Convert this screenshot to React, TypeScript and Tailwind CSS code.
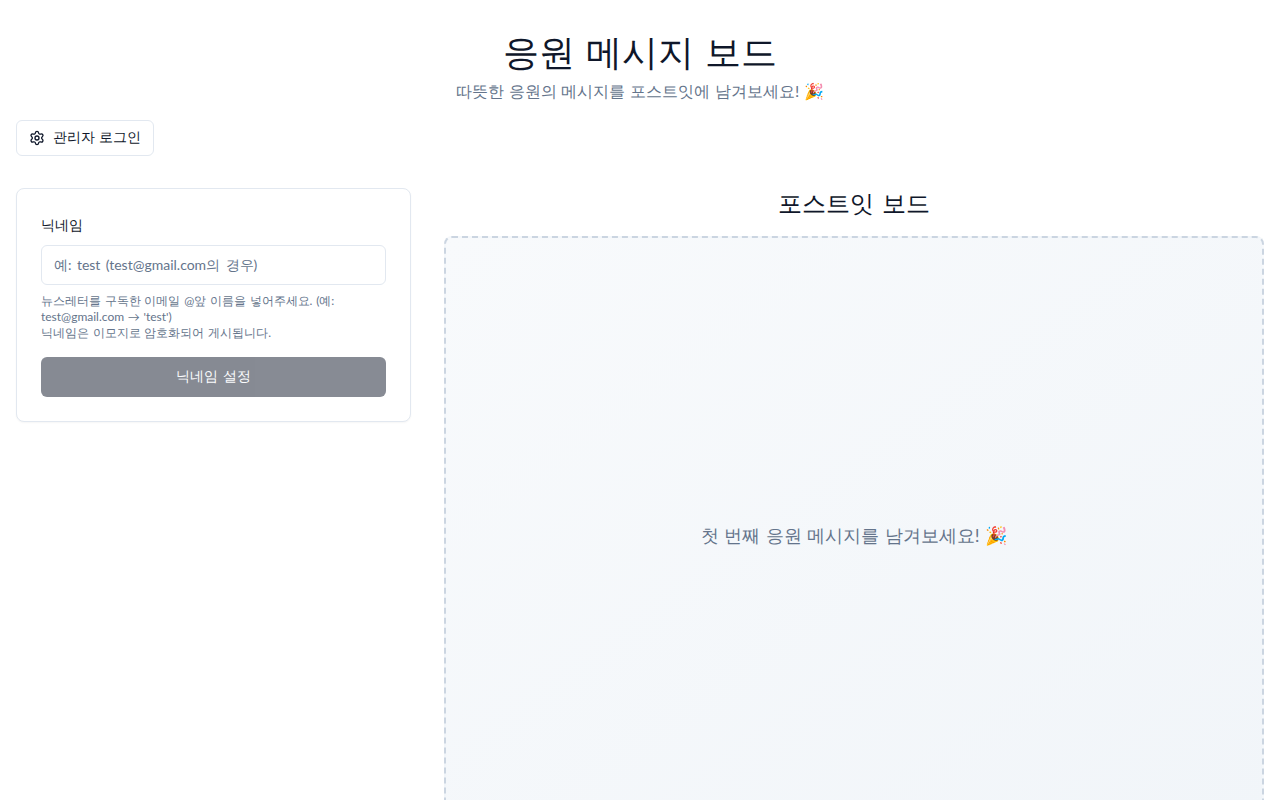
import { Settings } from 'lucide-react';

export default function App() {
    return (
        <div className="min-h-screen bg-white p-4 font-['Lato',sans-serif] [word-spacing:0.04em] text-[#0f172a]">
            <header className="mb-[17px] text-center">
                <h1 className="mt-[15px] mb-2 text-4xl leading-10 [word-spacing:0.06em]">응원 메시지 보드</h1>
                <p className="text-base leading-6 text-[#64748b]">따뜻한 응원의 메시지를 포스트잇에 남겨보세요! 🎉</p>
            </header>

            <button className="flex h-9 items-center gap-2 rounded-md border border-[#e2e8f0] bg-white px-3 pb-[2px] text-sm">
                <Settings className="mt-[2px] h-4 w-4" />
                관리자 로그인
            </button>

            <div className="mt-8 grid grid-cols-[395px_1fr] items-start gap-[33px]">
                <div className="rounded-lg border border-[#e2e8f0] bg-white p-6 shadow-[0_1px_2px_rgba(0,0,0,0.04)]">
                    <label className="mt-[2px] block text-sm leading-[20px]">닉네임</label>
                    <input
                        className="mt-[10px] h-10 w-full rounded-md border border-[#e2e8f0] bg-white px-3 pb-[2px] text-sm [word-spacing:0.13em] placeholder:text-[#64748b]"
                        placeholder="예: test (test@gmail.com의 경우)"
                    />
                    <p className="mt-2 text-xs leading-4 text-[#64748b]">
                        뉴스레터를 구독한 이메일 @앞 이름을 넣어주세요. (예: test@gmail.com → 'test')
                        <br />
                        닉네임은 이모지로 암호화되어 게시됩니다.
                    </p>
                    <button
                        disabled
                        className="mt-4 h-10 w-full rounded-md bg-[#0f172a] pb-[2px] text-sm text-[#f8fafc] [word-spacing:0.1em] opacity-50"
                    >
                        닉네임 설정
                    </button>
                </div>

                <div>
                    <h2 className="-mt-px mb-[17px] text-center text-2xl leading-8 [word-spacing:0.08em]">포스트잇 보드</h2>
                    <div className="flex h-[600px] items-center justify-center rounded-lg border-2 border-dashed border-[#cbd5e1] bg-gradient-to-br from-[#f8fafc] to-[#f1f5f9] pb-[2px]">
                        <p className="text-lg leading-7 text-[#64748b] [word-spacing:0.047em]">첫 번째 응원 메시지를 남겨보세요! 🎉</p>
                    </div>
                </div>
            </div>
        </div>
    );
}
